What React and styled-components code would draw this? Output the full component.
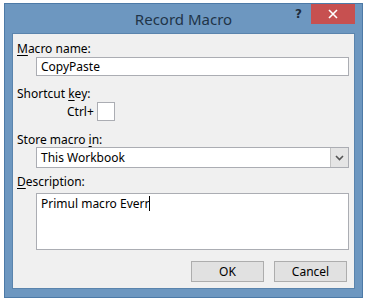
import React, { useState } from 'react';
import styled, { createGlobalStyle } from 'styled-components';

const GlobalStyle = createGlobalStyle`
  body {
    margin: 0;
    background: #ffffff;
    font-family: "Noto Sans", "Liberation Sans", sans-serif;
  }
`;

const App = () => {
  const [name, setName] = useState('CopyPaste');
  const [key, setKey] = useState('');
  const [desc] = useState('Primul macro Everr');

  return (
    <>
      <GlobalStyle />
      <Window>
        <TitleBar>
          <span />
          <Title>Record Macro</Title>
          <Controls>
            <Help>?</Help>
            <CloseButton aria-label="Close">
              <svg width="10" height="10" viewBox="0 0 10 10">
                <path d="M1 1 L9 9 M9 1 L1 9" stroke="#fff" strokeWidth="1.6" />
              </svg>
            </CloseButton>
          </Controls>
        </TitleBar>

        <Client>
          <Label>
            <u>M</u>acro name:
          </Label>
          <TextInput value={name} onChange={(e) => setName(e.target.value)} />

          <Label $gap={10}>
            Shortcut <u>k</u>ey:
          </Label>
          <CtrlRow>
            <span>Ctrl+</span>
            <KeyBox value={key} maxLength={1} onChange={(e) => setKey(e.target.value)} />
          </CtrlRow>

          <Label $gap={11}>
            Store macro <u>i</u>n:
          </Label>
          <Select>
            <span>This Workbook</span>
            <DropButton>
              <svg width="9" height="6" viewBox="0 0 9 6">
                <path d="M1 1 L4.5 4.5 L8 1" stroke="#555" strokeWidth="1.6" fill="none" />
              </svg>
            </DropButton>
          </Select>

          <Label $gap={6}>
            <u>D</u>escription:
          </Label>
          <TextArea>
            {desc}
            <Caret />
          </TextArea>

          <ButtonRow>
            <Button>OK</Button>
            <Button>Cancel</Button>
          </ButtonRow>
        </Client>
      </Window>
    </>
  );
};

export default App;

const Window = styled.div`
  box-sizing: border-box;
  margin: 3px 0 0 4px;
  width: 359px;
  height: 295px;
  border: 1px solid #4d7aa7;
  background: #6d97c0;
  display: flex;
  flex-direction: column;
`;

const TitleBar = styled.div`
  height: 29px;
  display: grid;
  grid-template-columns: 1fr auto 1fr;
  align-items: start;
`;

const Title = styled.div`
  margin-top: 5px;
  font-size: 15px;
  line-height: 20px;
  color: #1f3448;
`;

const Controls = styled.div`
  justify-self: end;
  display: flex;
  align-items: flex-start;
  margin-right: 7px;
`;

const Help = styled.span`
  font-family: "DejaVu Sans", sans-serif;
  font-weight: bold;
  font-size: 12px;
  line-height: 20px;
  color: #1f2d3b;
  margin-right: 9px;
`;

const CloseButton = styled.div`
  width: 44px;
  height: 20px;
  background: #c75050;
  display: flex;
  align-items: center;
  justify-content: center;
`;

const Client = styled.div`
  box-sizing: border-box;
  margin: 0 7px 0 7px;
  height: 256px;
  background: #f0f0f0;
  border: 1px solid #5a84ad;
  padding: 7px 5px 0 4px;
  display: flex;
  flex-direction: column;
  font-size: 12px;
  color: #000;
`;

const Label = styled.div`
  margin-top: ${(p) => p.$gap || 0}px;
  line-height: 15px;
  height: 15px;
  u {
    text-decoration: underline;
    text-underline-offset: 2px;
  }
`;

const fieldBox = `
  box-sizing: border-box;
  margin-left: 19px;
  background: #fff;
  border: 1px solid #abadb3;
`;

const TextInput = styled.input`
  ${fieldBox}
  margin-top: 1px;
  height: 19px;
  padding: 0 4px;
  font: inherit;
  font-size: 12px;
  outline: none;
`;

const CtrlRow = styled.div`
  margin-top: 1px;
  display: flex;
  align-items: center;
  height: 19px;
  padding-left: 50px;
  gap: 3px;
`;

const KeyBox = styled.input`
  box-sizing: border-box;
  width: 18px;
  height: 19px;
  border: 1px solid #abadb3;
  background: #fff;
  padding: 0;
  outline: none;
`;

const Select = styled.div`
  ${fieldBox}
  height: 21px;
  display: flex;
  align-items: center;
  justify-content: space-between;
  padding-left: 4px;
`;

const DropButton = styled.div`
  box-sizing: border-box;
  width: 18px;
  height: 19px;
  background: #e5e5e5;
  border-left: 1px solid #c4c4c4;
  display: flex;
  align-items: center;
  justify-content: center;
`;

const TextArea = styled.div`
  ${fieldBox}
  margin-top: 4px;
  height: 57px;
  padding: 2px 4px;
  line-height: 16px;
`;

const Caret = styled.span`
  display: inline-block;
  width: 1px;
  height: 15px;
  background: #000;
  vertical-align: -3px;
`;

const ButtonRow = styled.div`
  margin-top: 11px;
  display: flex;
  justify-content: flex-end;
  gap: 10px;
  padding-right: 2px;
`;

const Button = styled.div`
  box-sizing: border-box;
  width: 73px;
  height: 21px;
  background: #e1e1e1;
  border: 1px solid #adadad;
  display: flex;
  align-items: center;
  justify-content: center;
`;
